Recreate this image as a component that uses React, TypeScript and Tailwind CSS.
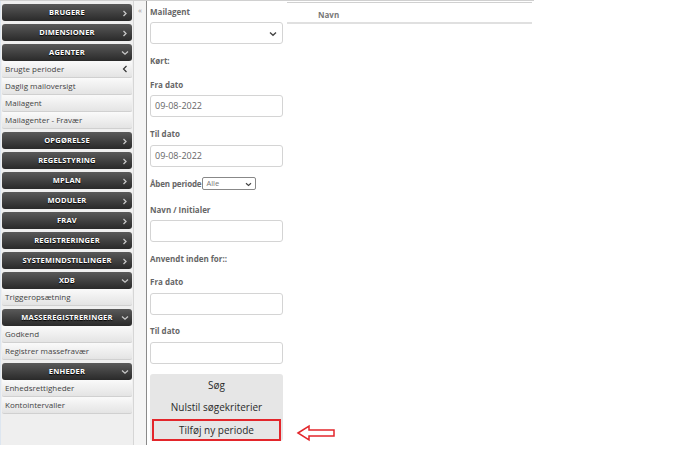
import React from "react";

type Group = { title: string; open?: boolean; items?: { label: string; active?: boolean }[] };

const groups: Group[] = [
  { title: "BRUGERE" },
  { title: "DIMENSIONER" },
  {
    title: "AGENTER",
    open: true,
    items: [
      { label: "Brugte perioder", active: true },
      { label: "Daglig mailoversigt" },
      { label: "Mailagent" },
      { label: "Mailagenter - Fravær" },
    ],
  },
  { title: "OPGØRELSE" },
  { title: "REGELSTYRING" },
  { title: "MPLAN" },
  { title: "MODULER" },
  { title: "FRAV" },
  { title: "REGISTRERINGER" },
  { title: "SYSTEMINDSTILLINGER" },
  { title: "XDB", open: true, items: [{ label: "Triggeropsætning" }] },
  {
    title: "MASSEREGISTRERINGER",
    open: true,
    items: [{ label: "Godkend" }, { label: "Registrer massefravær" }],
  },
  {
    title: "ENHEDER",
    open: true,
    items: [{ label: "Enhedsrettigheder" }, { label: "Kontointervaller" }],
  },
];

const ChevronRight = () => (
  <svg width="6" height="7" viewBox="0 0 6 7" className="absolute right-[4px] top-[6px]">
    <path d="M1.5 1 L4 3.5 L1.5 6" stroke="#c8c8c8" strokeWidth="1.3" fill="none" />
  </svg>
);
const ChevronDown = () => (
  <svg width="8" height="6" viewBox="0 0 8 6" className="absolute right-[3px] top-[6px]">
    <path d="M1 1.5 L4 4.2 L7 1.5" stroke="#c8c8c8" strokeWidth="1.3" fill="none" />
  </svg>
);

function Header({ g }: { g: Group }) {
  return (
    <div className="relative h-[17px] shrink-0 rounded-[3px] bg-gradient-to-b from-[#5a5a5a] to-[#2a2a2a] flex items-center justify-center text-white font-bold text-[7.5px] tracking-[0.2px] [text-shadow:0_1px_1px_#000]">
      {g.title}
      {g.open ? <ChevronDown /> : <ChevronRight />}
    </div>
  );
}

const Label = ({ children, className = "" }: { children: React.ReactNode; className?: string }) => (
  <div className={`h-[12px] leading-[12px] text-[8px] font-bold text-[#666] shrink-0 ${className}`}>{children}</div>
);

const Input = ({ value, className = "" }: { value?: string; className?: string }) => (
  <div
    className={`h-[22px] w-[133px] shrink-0 border border-[#d4d4d4] rounded-[3px] bg-white flex items-center px-[4px] text-[9px] text-[#666] ${className}`}
  >
    {value}
  </div>
);

export default function App() {
  return (
    <div
      className="w-[700px] h-[463px] bg-white relative overflow-hidden"
      style={{ fontFamily: '"Open Sans", "Noto Sans", sans-serif' }}
    >
      <div className="absolute left-0 top-0 w-[534px] h-px bg-[#d0d0d0]" />
      <div className="flex h-[445px]">
        {/* Sidebar */}
        <div className="w-[134px] shrink-0 bg-[#efefef] border-r border-[#d6d6d6] border-l border-l-[#dde6f0] pt-[4px] px-[1px] flex flex-col gap-[3px]">
          {groups.map((g) => (
            <div key={g.title} className="flex flex-col shrink-0">
              <Header g={g} />
              {g.items?.map((it) => (
                <div
                  key={it.label}
                  className="relative h-[17px] shrink-0 bg-gradient-to-b from-[#fafafa] to-[#e4e4e4] border-b border-[#d0d0d0] rounded-b-[2px] flex items-center pl-[3px] text-[8px] text-[#444]"
                >
                  {it.label}
                  {it.active && (
                    <svg width="6" height="8" viewBox="0 0 6 8" className="absolute right-[4px] top-[4px]">
                      <path d="M4.5 1 L1.5 4 L4.5 7" stroke="#333" strokeWidth="1.2" fill="none" />
                    </svg>
                  )}
                </div>
              ))}
            </div>
          ))}
        </div>
        {/* Collapse strip */}
        <div className="w-[13px] shrink-0 bg-[#f4f4f4] border-r border-[#8a8a8a] flex justify-center pt-[6px]">
          <span className="text-[8px] leading-none text-[#999]">«</span>
        </div>
        {/* Form */}
        <div className="w-[140px] shrink-0 pl-[3px] pt-[6px] flex flex-col">
          <Label>Mailagent</Label>
          <div className="mt-[4px] h-[22px] w-[133px] shrink-0 border border-[#d4d4d4] rounded-[3px] bg-white relative">
            <svg width="8" height="6" viewBox="0 0 8 6" className="absolute right-[5px] top-[8px]">
              <path d="M1 1.5 L4 4.2 L7 1.5" stroke="#444" strokeWidth="1.4" fill="none" />
            </svg>
          </div>
          <Label className="mt-[11px]">Kørt:</Label>
          <Label className="mt-[12px]">Fra dato</Label>
          <Input value="09-08-2022" className="mt-[4px]" />
          <Label className="mt-[11px]">Til dato</Label>
          <Input value="09-08-2022" className="mt-[5px]" />
          <div className="mt-[10px] h-[13px] shrink-0 flex items-center">
            <Label className="tracking-[-0.15px]">Åben periode</Label>
            <div className="ml-px h-[13px] w-[54px] border border-[#888] rounded-[2px] bg-white relative text-[7.5px] text-[#777] flex items-center pl-[3px]">
              Alle
              <svg width="7" height="5" viewBox="0 0 8 6" className="absolute right-[3px] top-[4px]">
                <path d="M1 1.5 L4 4.2 L7 1.5" stroke="#444" strokeWidth="1.4" fill="none" />
              </svg>
            </div>
          </div>
          <Label className="mt-[14px]">Navn / Initialer</Label>
          <Input className="mt-[4px]" />
          <Label className="mt-[11px]">Anvendt inden for::</Label>
          <Label className="mt-[11px]">Fra dato</Label>
          <Input className="mt-[5px]" />
          <Label className="mt-[10px]">Til dato</Label>
          <Input className="mt-[5px]" />
          <div className="mt-[10px] w-[133px] h-[67px] shrink-0 bg-[#e6e6e6] rounded-[3px] flex flex-col items-center text-[10px] text-[#2a2a2a]">
            <div className="h-[22px] flex items-center">Søg</div>
            <div className="h-[23px] flex items-center">Nulstil søgekriterier</div>
            <div className="h-[22px] w-[129px] border-2 border-[#e3262b] flex items-center justify-center">
              Tilføj ny periode
            </div>
          </div>
        </div>
        {/* Table header */}
        <div className="w-[245px] shrink-0 pt-[2px]">
          <div className="h-[22px] border-t border-[#d0d0d0] border-b-2 border-b-[#e0e0e0] flex items-start pt-[6px] pl-[31px] text-[8px] leading-[12px] font-bold text-[#777]">
            Navn
          </div>
        </div>
      </div>
      {/* Arrow annotation */}
      <svg width="42" height="18" viewBox="0 0 42 18" className="absolute left-[296px] top-[424px]">
        <path
          d="M2 9 L13 2 L13 6 L38 6 L38 12 L13 12 L13 16 Z"
          fill="none"
          stroke="#e3262b"
          strokeWidth="1.5"
          strokeLinejoin="miter"
        />
      </svg>
    </div>
  );
}
